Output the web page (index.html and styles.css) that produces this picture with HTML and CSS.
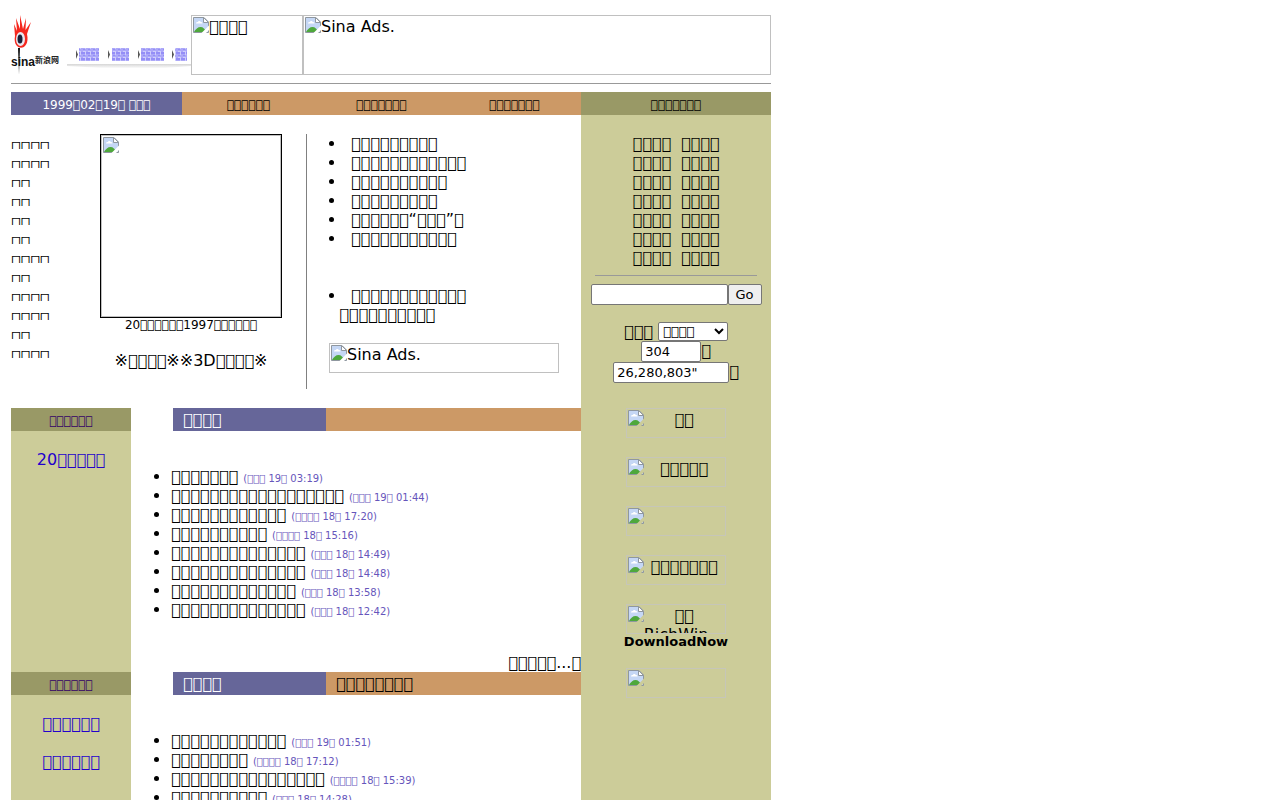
FILE: index.html
```html
<!DOCTYPE html>
<html lang="zh">
<head>
<meta charset="utf-8">
<title>Sina</title>
<link rel="stylesheet" href="styles.css">
</head>
<body>
<svg class="defs" aria-hidden="true">
  <symbol id="broken" viewBox="0 0 16 16">
    <path d="M.5.5h10.500l4.500 4.500v10.500H.5z" fill="#c5d7f5"/>
    <path d="M3 6.500c0-1 .8-1.800 1.800-1.500.4-1.500 2.700-1.500 3 0 1.200-.2 1.800.6 1.700 1.500z" fill="#fff"/>
    <path d="M1 15c1.500-3 4-5 6.500-5s4.500 2 6 5z" fill="#4ea83c"/>
    <path d="M.5 15.500V.5h10.500l4.500 4.500v10.500z" fill="none" stroke="#8f979f"/>
    <path d="M10.500.5v5h5z" fill="#fff" stroke="#8f979f"/>
    <path d="M16 8.500L8.500 16h4.500l3-3z" fill="var(--back, #fff)"/>
  </symbol>
</svg>
<div class="page">
  <header class="top">
    <svg class="logo" viewBox="0 0 180 60" role="img" aria-label="Sina">
      <defs>
        <linearGradient id="shade" x1="0" y1="0" x2="0" y2="1"><stop offset="0" stop-color="#d6d6d6"/><stop offset="1" stop-color="#fff"/></linearGradient>
        <pattern id="ink" width="5" height="6" patternUnits="userSpaceOnUse"><path d="M1 0v6M3 1v4M0 2h4M2 5h3" stroke="#5a50f0" stroke-width=".6" fill="none"/></pattern>
      </defs>
      <path d="M56 49h124v2q-50 5-124 0z" fill="url(#shade)"/>
      <path d="M4 21L3 9l3 7L5 3l4 11 0-14 3 14 3-11-.5 12L20 7l-4 12C20 37 1 37 4 21z" fill="#f5281e"/>
      <ellipse cx="9.500" cy="24" rx="4.500" ry="7" fill="#e8e8f0"/>
      <ellipse cx="9" cy="24" rx="2.500" ry="4.500" fill="#182038"/>
      <path d="M7 33l1 26 1-26z" fill="#111"/>
      <text class="logo-name" x="0" y="51">sina</text>
      <text class="logo-cjk" x="24" y="48">新浪网</text>
      <g fill="#cfcdfc"><path d="M68 33h20v13H68zM101 33h17v13h-17zM130 33h23v13h-23zM164 33h12v13h-12z"/></g>
      <g fill="url(#ink)"><path d="M68 33h20v13H68zM101 33h17v13h-17zM130 33h23v13h-23zM164 33h12v13h-12z"/></g>
      <path d="M65 35v9l2-4.500zM97 35v9l2-4.500zM127 35v9l2-4.500zM161 35v9l2-4.500z" fill="#555"/>
    </svg>
    <div class="ad ad-small"><svg class="ico"><use href="#broken"/></svg>▯▯▯▯</div>
    <div class="ad ad-wide"><svg class="ico"><use href="#broken"/></svg>Sina Ads.</div>
  </header>
  <hr class="rule">
  <nav class="bar">
    <span class="date">1999▯02▯19▯ ▯▯▯</span>
    <div class="tabs"><a href="#">▯▯▯▯▯▯</a><a href="#">▯▯▯▯▯▯▯</a><a href="#">▯▯▯▯▯▯▯</a></div>
    <a class="olive" href="#">▯▯▯▯▯▯▯</a>
  </nav>
  <div class="columns">
    <main class="main">
      <section class="feature">
        <ul class="channels">
          <li>▯▯▯▯</li><li>▯▯▯▯</li><li>▯▯</li><li>▯▯</li><li>▯▯</li><li>▯▯</li>
          <li>▯▯▯▯</li><li>▯▯</li><li>▯▯▯▯</li><li>▯▯▯▯</li><li>▯▯</li><li>▯▯▯▯</li>
        </ul>
        <figure class="photo">
          <div class="frame"><div class="frame-in"><svg class="ico"><use href="#broken"/></svg></div></div>
          <figcaption>20▯▯▯▯▯▯1997▯▯▯▯▯▯</figcaption>
          <p>※▯▯▯▯※※3D▯▯▯▯※</p>
        </figure>
        <div class="headlines">
          <ul>
            <li>▯▯▯▯▯▯▯▯▯</li>
            <li>▯▯▯▯▯▯▯▯▯▯▯▯</li>
            <li>▯▯▯▯▯▯▯▯▯▯</li>
            <li>▯▯▯▯▯▯▯▯▯</li>
            <li>▯▯▯▯▯▯“▯▯▯”▯</li>
            <li>▯▯▯▯▯▯▯▯▯▯▯</li>
          </ul>
          <ul>
            <li>▯▯▯▯▯▯▯▯▯▯▯▯<br>&nbsp;&nbsp;▯▯▯▯▯▯▯▯▯▯</li>
          </ul>
          <div class="ad ad-strip"><svg class="ico"><use href="#broken"/></svg>Sina Ads.</div>
        </div>
      </section>

      <section class="block">
        <aside class="side">
          <h2>▯▯▯▯▯▯</h2>
          <a href="#">20▯▯▯▯▯</a>
        </aside>
        <div class="news">
          <div class="title"><h2>▯▯▯▯</h2><span></span></div>
          <ul>
            <li>▯▯▯▯▯▯▯ <small>(▯▯▯ 19▯ 03:19)</small></li>
            <li>▯▯▯▯▯▯▯▯▯▯▯▯▯▯▯▯▯▯ <small>(▯▯▯ 19▯ 01:44)</small></li>
            <li>▯▯▯▯▯▯▯▯▯▯▯▯ <small>(▯▯▯▯ 18▯ 17:20)</small></li>
            <li>▯▯▯▯▯▯▯▯▯▯ <small>(▯▯▯▯ 18▯ 15:16)</small></li>
            <li>▯▯▯▯▯▯▯▯▯▯▯▯▯▯ <small>(▯▯▯ 18▯ 14:49)</small></li>
            <li>▯▯▯▯▯▯▯▯▯▯▯▯▯▯ <small>(▯▯▯ 18▯ 14:48)</small></li>
            <li>▯▯▯▯▯▯▯▯▯▯▯▯▯ <small>(▯▯▯ 18▯ 13:58)</small></li>
            <li>▯▯▯▯▯▯▯▯▯▯▯▯▯▯ <small>(▯▯▯ 18▯ 12:42)</small></li>
          </ul>
          <a class="more" href="#">▯▯▯▯▯...▯</a>
        </div>
      </section>

      <section class="block">
        <aside class="side">
          <h2>▯▯▯▯▯▯</h2>
          <a href="#">▯▯▯▯▯▯</a>
          <a href="#">▯▯▯▯▯▯</a>
        </aside>
        <div class="news">
          <div class="title"><h2>▯▯▯▯</h2><span>▯▯▯▯▯▯▯▯</span></div>
          <ul>
            <li>▯▯▯▯▯▯▯▯▯▯▯▯ <small>(▯▯▯ 19▯ 01:51)</small></li>
            <li>▯▯▯▯▯▯▯▯ <small>(▯▯▯▯ 18▯ 17:12)</small></li>
            <li>▯▯▯▯▯▯▯▯▯▯▯▯▯▯▯▯ <small>(▯▯▯▯ 18▯ 15:39)</small></li>
            <li>▯▯▯▯▯▯▯▯▯▯ <small>(▯▯▯ 18▯ 14:28)</small></li>
          </ul>
        </div>
      </section>
    </main>

    <aside class="right">
      <div class="links">
        <a href="#">▯▯▯▯</a><a href="#">▯▯▯▯</a>
        <a href="#">▯▯▯▯</a><a href="#">▯▯▯▯</a>
        <a href="#">▯▯▯▯</a><a href="#">▯▯▯▯</a>
        <a href="#">▯▯▯▯</a><a href="#">▯▯▯▯</a>
        <a href="#">▯▯▯▯</a><a href="#">▯▯▯▯</a>
        <a href="#">▯▯▯▯</a><a href="#">▯▯▯▯</a>
        <a href="#">▯▯▯▯</a><a href="#">▯▯▯▯</a>
      </div>
      <hr class="rule">
      <form class="search"><input type="text" aria-label="Search"><button type="button">Go</button></form>
      <form class="stats">
        <div class="row"><label for="zone">▯▯▯</label><select id="zone"><option>▯▯▯▯</option></select></div>
        <div class="row tight"><input id="count" class="short" type="text" value="304"><label for="count">▯</label></div>
        <div class="row tight"><input id="total" class="long" type="text" value='26,280,803"'><label for="total">▯</label></div>
      </form>
      <div class="badges">
        <div class="badge"><svg class="ico"><use href="#broken"/></svg><span>▯▯</span></div>
        <div class="badge"><svg class="ico"><use href="#broken"/></svg><span>▯▯▯▯▯</span></div>
        <div class="badge"><svg class="ico"><use href="#broken"/></svg></div>
        <div class="badge"><svg class="ico"><use href="#broken"/></svg><span>▯▯▯▯▯▯▯</span></div>
        <div class="download">
          <div class="badge"><svg class="ico"><use href="#broken"/></svg><span>▯▯</span><p>RichWin</p></div>
          <a href="#">DownloadNow</a>
        </div>
        <div class="badge"><svg class="ico"><use href="#broken"/></svg></div>
      </div>
    </aside>
  </div>
</div>
<script src="boxes.js"></script>
</body>
</html>
```

FILE: styles.css
```css
body { margin: 0; padding: 15px 11px 0; background: #fff; color: #000; font: 16px/19px "DejaVu Sans", sans-serif; text-rendering: optimizeSpeed; }
a { color: inherit; text-decoration: none; }
ul { margin: 0; padding: 0; }
h2, p, figure { margin: 0; font-weight: normal; }
.defs { display: none; }
.ico { width: 16px; height: 16px; flex: none; }
.page { max-width: 760px; }

.top { display: flex; }
.logo { width: 180px; height: 60px; flex: none; }
.logo-name { font: bold 12px "Liberation Sans Narrow", "Liberation Sans", sans-serif; fill: #111; }
.logo-cjk { font: bold 8px "Noto Sans CJK SC", sans-serif; fill: #222; }
.ad { display: flex; box-sizing: border-box; border: 1px solid #c0c0c0; padding: 1px; }
.ad-small { width: 112px; }
.ad-wide { flex: 1; }
.ad-strip { height: 30px; }
.rule { margin: 8px 0; border: 0; border-top: 1px solid #999; }

.bar { display: flex; font-size: 12px; line-height: 19px; text-align: center; }
.date { width: 171px; padding-top: 4px; background: #669; color: #fff; }
.tabs { display: flex; flex: 1; padding-top: 4px; background: #c96; }
.tabs a { flex: 1; }
.olive { width: 190px; padding-top: 4px; background: #996; }

.columns { display: flex; }
.main { flex: 1; }
.feature { display: flex; margin: 19px 0; }
.channels { width: 89px; list-style: none; }
.channels li { height: 11px; padding-top: 4px; margin-bottom: 4px; overflow: hidden; }
.photo { width: 182px; text-align: center; }
.frame { border: 1px solid #000; }
.frame-in { display: flex; height: 178px; padding: 1px; border: 1px solid #c0c0c0; }
figcaption { font-size: 12px; line-height: 14px; white-space: nowrap; }
.photo p { margin-top: 19px; white-space: nowrap; }
.headlines { flex: 1; margin-left: 24px; padding: 0 22px 16px; border-left: 1px solid #808080; }
.headlines ul { list-style: disc inside; margin: 0 0 38px; }
.headlines ul + ul { margin-bottom: 19px; }

.block { display: flex; }
.side { width: 120px; background: #cc9; text-align: center; }
.side h2 { padding-top: 4px; background: #996; color: #306; font-size: 12px; line-height: 19px; }
.side a { display: block; margin-top: 19px; color: #20c; }
.news { flex: 1; padding-left: 40px; }
.title { display: flex; margin-left: 2px; line-height: 23px; }
.title h2 { width: 143px; padding-left: 10px; background: #669; color: #fff; font-size: 16px; }
.title span { flex: 1; padding-left: 10px; background: #c96; }
.news ul { margin: 36px 0 34px; }
.news small { font-size: 10px; line-height: 12px; color: #65b; }
.more { display: block; text-align: right; }

.right { --back: #cc9; width: 190px; background: #cc9; }
.links { display: grid; grid-template-columns: auto auto; justify-content: center; column-gap: 10px; margin-top: 19px; }
.right .rule { margin: 8px 14px; }
.search { display: flex; justify-content: center; }
input, select, button { box-sizing: border-box; height: 21px; margin: 0; border: 1px solid #767676; border-radius: 2px; padding: 0 3px; background: #fff; color: #000; font: 13px "DejaVu Sans", sans-serif; }
.search input { width: 137px; }
button { width: 34px; padding: 0; background: #efefef; }
.stats { margin-top: 17px; }
.row { display: flex; justify-content: center; gap: 5px; }
.tight { gap: 0; }
select { width: 70px; height: 19px; padding: 0; }
.short { width: 60px; }
.long { width: 116px; }
.badges { display: flex; flex-direction: column; align-items: center; gap: 19px; margin-top: 25px; }
.badge { box-sizing: border-box; width: 100px; height: 30px; margin: 0 auto; border: 1px solid #c6c6b8; padding: 1px; display: grid; grid-template-columns: 16px 1fr; grid-auto-rows: 19px; text-align: center; overflow: hidden; }
.badge p { grid-column: 1 / 3; }
.download { text-align: center; font-size: 13px; font-weight: bold; line-height: 15px; }
.download .badge { font-size: 16px; font-weight: normal; line-height: 19px; }
```

FILE: boxes.js
```javascript
// Each ▯ stands for a character without a glyph in the page's font.
const walker = document.createTreeWalker(document.body, NodeFilter.SHOW_TEXT);
while (walker.nextNode()) {
  const node = walker.currentNode;
  if (node.data.includes("▯")) node.data = node.data.replaceAll("▯", "\uE000");
}
```
